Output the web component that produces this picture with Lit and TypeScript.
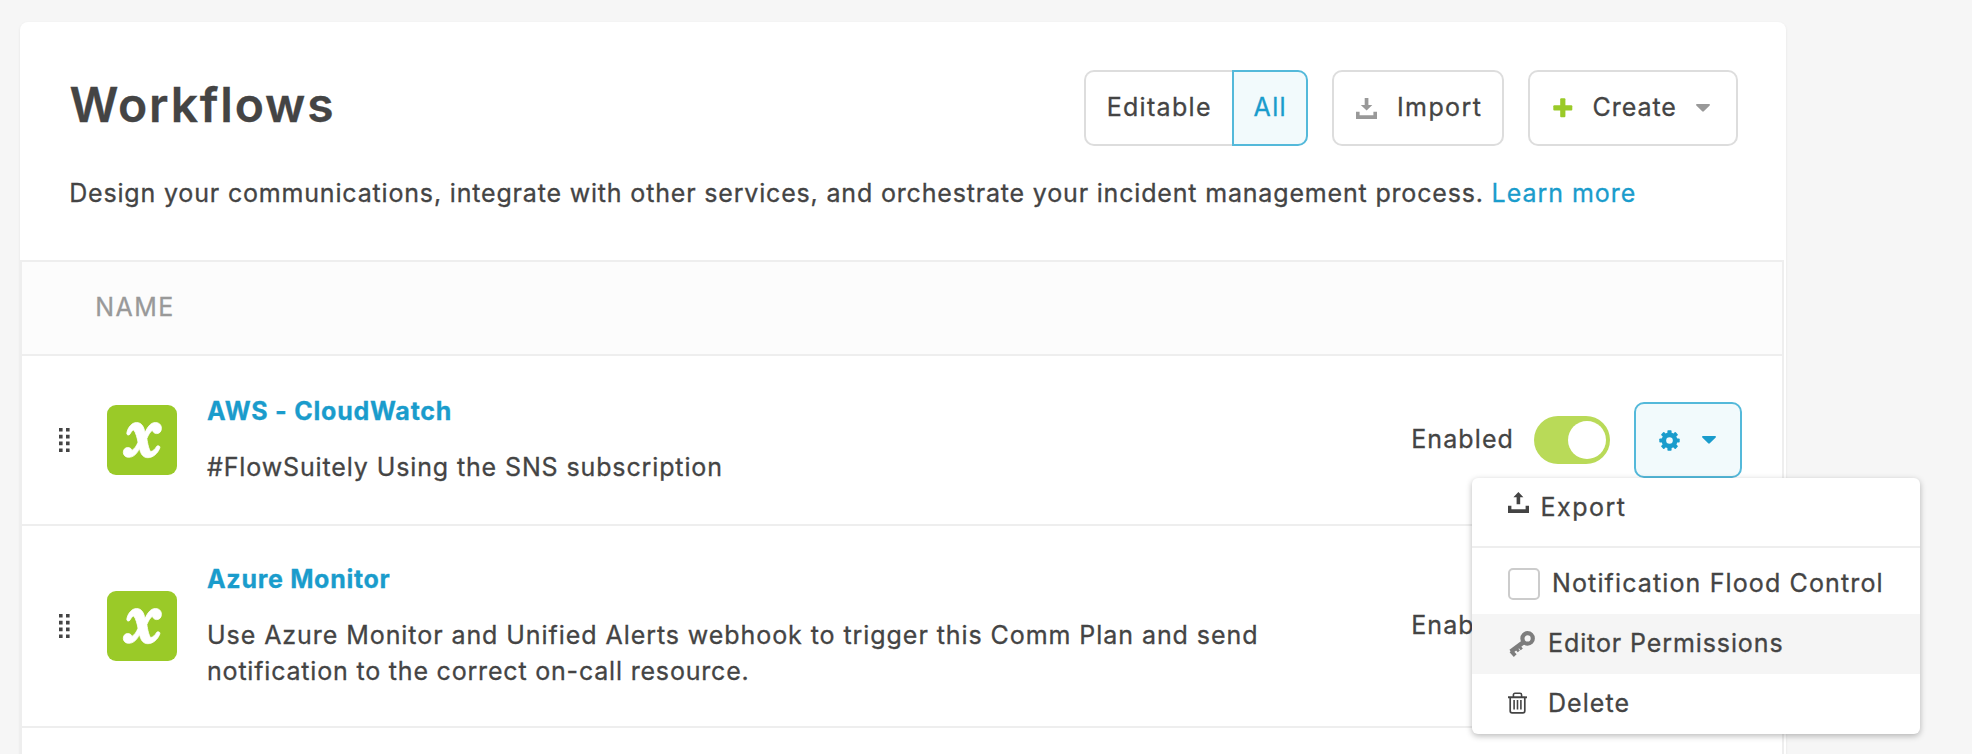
import { LitElement, html, css, nothing } from "lit";
import { customElement, property } from "lit/decorators.js";

const trayDown = html`<svg class="icon" width="21" height="21" viewBox="0 0 21 21" fill="currentColor">
  <path d="M8.7 0h3.7v7h3.9l-5.7 5.6L4.8 7h3.9z" /><path d="M0 13.7h3.6v3.6h13.8v-3.6H21V21H0z" />
</svg>`;

const trayUp = html`<svg class="icon" width="21" height="21" viewBox="0 0 21 21" fill="currentColor">
  <path d="M10.4 0l5 5.2h-3.2v7.1H8.6V5.2H5.4z" /><path d="M0 13.7h3.4v3.6h14.2v-3.6H21V21H0z" />
</svg>`;

const plus = html`<svg class="icon" width="20" height="20" viewBox="0 0 20 20" fill="#9aca28">
  <rect x="7.2" y="0.3" width="5.2" height="19" rx="1" /><rect x="0.3" y="7.2" width="19" height="5.2" rx="1" />
</svg>`;

const caret = html`<svg class="icon" width="14" height="8" viewBox="0 0 14 8" fill="currentColor">
  <path d="M1 0h12c.9 0 1.3.8.7 1.4L7.8 7.3c-.5.5-1.1.5-1.6 0L.3 1.4C-.3.8.1 0 1 0z" />
</svg>`;

const gear = html`<svg class="icon" width="21" height="21" viewBox="-10.5 -10.5 21 21" fill="currentColor">
  <rect x="-2.1" y="-10.2" width="4.2" height="20.4" rx=".8" />
  <rect x="-2.1" y="-10.2" width="4.2" height="20.4" rx=".8" transform="rotate(45)" />
  <rect x="-2.1" y="-10.2" width="4.2" height="20.4" rx=".8" transform="rotate(90)" />
  <rect x="-2.1" y="-10.2" width="4.2" height="20.4" rx=".8" transform="rotate(135)" />
  <circle r="7.9" /><circle r="3.3" fill="#f2fafc" />
</svg>`;

const key = html`<svg class="icon" width="28" height="28" viewBox="0 0 28 28" fill="none" stroke="#7d7d7d">
  <circle cx="19.6" cy="8.4" r="5.2" stroke-width="4.2" />
  <path d="M15.6 12.2L2.8 21.6" stroke-width="4.6" />
  <path d="M3 21l4.2 4.6" stroke-width="3.8" />
  <path d="M8.4 18.6l2.4 2.8M11.6 16.8l2.2 2.6" stroke-width="2.8" />
</svg>`;

const trash = html`<svg class="icon" width="19" height="22" viewBox="0 0 19 22" fill="none" stroke="#444">
  <path d="M0 5.3h19" stroke-width="1.9" />
  <path d="M5.4 5V2.9c0-1 .6-1.6 1.6-1.6h5c1 0 1.6.6 1.6 1.6V5" stroke-width="1.6" />
  <path d="M2.2 5.5v13.4c0 1.2.7 1.9 1.9 1.9h10.8c1.2 0 1.9-.7 1.9-1.9V5.5" stroke-width="1.7" />
  <path d="M6.1 8v9.4M9.5 8v9.4M12.9 8v9.4" stroke-width="1.6" />
</svg>`;

const handle = html`<svg class="handle" width="11" height="24" viewBox="0 0 11 24" fill="#444">
  <path d="M0 0h3.6v3.6H0zM7 0h3.6v3.6H7zM0 6.8h3.6v3.6H0zM7 6.8h3.6v3.6H7zM0 13.6h3.6v3.6H0zM7 13.6h3.6v3.6H7zM0 20.4h3.6V24H0zM7 20.4h3.6V24H7z" />
</svg>`;

const logo = html`<svg class="logo" width="70" height="70" viewBox="0 0 70 70">
  <rect width="70" height="70" rx="9" fill="#9aca28" />
  <path fill="#fff" stroke="#fff" stroke-width=".8" stroke-linejoin="round" d="M19.8 28.2C20.7 22.4 24.9 17.5 29.6 17.5C34.6 17.5 36.9 21.8 38 27.6C40.6 21.8 43.8 17.5 48.4 17.5C52 17.5 54.4 19.8 54.4 23.2C54.4 26.5 52.6 28.6 49.7 28.6C47.2 28.6 46 27 45.4 25.2C43.2 26.8 41.2 30 39.9 33.6C40.6 38.6 41.8 44.4 43.7 46.6C46 46.2 48.4 43.8 49.6 41.4C50.6 40 53.4 40.9 52.9 42.8C50.8 48.4 46.2 52.7 40.8 52.7C36.2 52.7 33.8 49.4 32.5 43.6C29.8 48.8 26.6 52.3 21.8 52.3C18.4 52.3 16.3 50.2 16.3 47.3C16.3 44.4 18.3 42.5 20.8 42.5C23.2 42.5 24.4 43.8 25 45.4C27.4 44 29.6 40.8 31 37.2C30.2 32.8 29 28 26.7 24.9C24.9 25.6 23.8 27.6 22.7 29.4C21.8 30.6 19.5 30 19.8 28.2Z" />
</svg>`;

@customElement("workflow-row")
class WorkflowRow extends LitElement {
  @property() name = "";
  @property() kind = "";
  @property({ attribute: false }) lines: string[] = [];
  @property({ type: Boolean }) open = false;

  static styles = css`
    :host { display: flex; align-items: center; box-sizing: border-box; padding: 0 40px 0 37px; border-bottom: 2px solid #eee; color: #444; }
    .handle { flex: none; }
    .logo { flex: none; margin-left: 37px; }
    .text { flex: 1; display: flex; flex-direction: column; gap: 20px; margin-left: 30px; padding-bottom: 2px; line-height: 36px; white-space: nowrap; }
    .name { font-weight: 700; color: #1a9ccc; letter-spacing: .78px; }
    .name.azure { letter-spacing: .7px; }
    .line { letter-spacing: .875px; }
    .line.azure { letter-spacing: .935px; }
    .line.azure + .line { letter-spacing: .81px; }
    .state { padding-bottom: 2px; letter-spacing: 1.1px; }
    .toggle { display: flex; justify-content: flex-end; align-items: center; box-sizing: border-box; width: 76px; height: 48px; padding-right: 4px; margin-left: 20px; border-radius: 24px; background: #b9da58; }
    .knob { width: 38.5px; height: 38.5px; border-radius: 50%; background: #fff; }
    .gear { display: flex; align-items: center; gap: 22px; box-sizing: border-box; width: 108px; height: 76px; padding-left: 22.5px; margin-left: 24px; border: 2px solid #54b9da; border-radius: 10px; background: #f2fafc; color: #1a9ccc; }
    .anchor { position: relative; }
  `;

  render() {
    return html`
      ${handle} ${logo}
      <div class="text">
        <div class="name ${this.kind}">${this.name}</div>
        <div>${this.lines.map((l) => html`<div class="line ${this.kind}">${l}</div>`)}</div>
      </div>
      <div class="state">Enabled</div>
      <div class="toggle"><div class="knob"></div></div>
      <div class="anchor">
        <div class="gear">${gear}${caret}</div>
        ${this.open ? html`<slot></slot>` : nothing}
      </div>
    `;
  }
}

@customElement("workflow-menu")
class WorkflowMenu extends LitElement {
  static styles = css`
    :host { position: absolute; z-index: 2; top: 76px; right: -178px; width: 448px; height: 256px; border-radius: 6px; overflow: hidden; background: #fff; box-shadow: 0 2px 6px rgba(0, 0, 0, .28); white-space: nowrap; }
    .item { display: flex; align-items: center; box-sizing: border-box; height: 60px; padding-left: 36px; }
    .item.hover { background: #f5f5f5; }
    .label { padding-bottom: 2px; }
    .icon { display: block; flex: none; }
    .rule { height: 2px; margin: 8px 0 6px; background: #eee; }
    .up { margin: 0 11.5px 11px 0; }
    .box { box-sizing: border-box; width: 32px; height: 32px; margin-right: 12px; border: 2px solid #ccc; border-radius: 5px; background: #fff; }
    .key { margin-right: 12px; }
    .trash { margin: 0 21px 3px 0; }
    .export { letter-spacing: 1.5px; }
    .flood { letter-spacing: 1.13px; }
    .editor { letter-spacing: .9px; }
    .delete { letter-spacing: 1.05px; }
  `;

  render() {
    return html`
      <div class="item"><span class="up">${trayUp}</span><span class="label export">Export</span></div>
      <div class="rule"></div>
      <div class="item"><span class="box"></span><span class="label flood">Notification Flood Control</span></div>
      <div class="item hover"><span class="key">${key}</span><span class="label editor">Editor Permissions</span></div>
      <div class="item"><span class="trash">${trash}</span><span class="label delete">Delete</span></div>
    `;
  }
}

@customElement("app-root")
class AppRoot extends LitElement {
  static styles = css`
    :host { display: block; box-sizing: border-box; height: 754px; overflow: hidden; padding: 22px 0 0 20px; background: #f6f6f6; color: #444; font: 400 25px/30px Inter, sans-serif; -webkit-text-stroke: .3px currentColor; }
    .card { box-sizing: border-box; width: 1766px; height: 760px; border-radius: 8px 8px 0 0; background: #fff; box-shadow: 0 1px 3px rgba(0, 0, 0, .08); }
    .head { box-sizing: border-box; height: 238px; padding: 48px 48px 0; white-space: nowrap; }
    .bar { display: flex; align-items: center; height: 76px; }
    .title { flex: 1; margin: 0 0 0 1.5px; padding-bottom: 6px; font-size: 48px; line-height: 60px; font-weight: 600; letter-spacing: 1.85px; }
    .btn { display: flex; align-items: center; box-sizing: border-box; height: 76px; border: 2px solid #ddd; border-radius: 10px; }
    .btn span { padding-bottom: 2px; }
    .icon { display: block; flex: none; }
    .editable { width: 148px; padding-left: 20.7px; border-right: 0; border-radius: 10px 0 0 10px; letter-spacing: 1.3px; }
    .all { width: 76px; padding-left: 19.5px; border-color: #54b9da; border-radius: 0 10px 10px 0; background: #f2fafc; color: #1a9ccc; letter-spacing: 1.4px; }
    .import { width: 172px; margin-left: 24px; padding-left: 22px; gap: 20px; letter-spacing: 1.4px; }
    .create { width: 210px; margin-left: 24px; padding-left: 23px; gap: 19.5px; letter-spacing: .95px; }
    .gray { color: #999; }
    .intro { margin: 29px 0 0 1.2px; line-height: 36px; letter-spacing: .826px; }
    .link { color: #1a9ccc; letter-spacing: .95px; }
    .table { box-sizing: border-box; width: 1764px; height: 520px; border: 2px solid #eee; border-bottom: 0; }
    .th { display: flex; align-items: center; box-sizing: border-box; height: 94px; padding: 0 0 2px 73.3px; border-bottom: 2px solid #eee; background: #fcfcfc; color: #999; letter-spacing: 1.45px; }
    .first { height: 170px; }
    .second { height: 202px; }
  `;

  render() {
    return html`
      <div class="card">
        <div class="head">
          <div class="bar">
            <h1 class="title">Workflows</h1>
            <div class="btn editable"><span>Editable</span></div>
            <div class="btn all"><span>All</span></div>
            <div class="btn import"><i class="gray">${trayDown}</i><span>Import</span></div>
            <div class="btn create">${plus}<span>Create</span><i class="gray">${caret}</i></div>
          </div>
          <p class="intro">Design your communications, integrate with other services, and orchestrate your incident management process. <a class="link">Learn more</a></p>
        </div>
        <div class="table">
          <div class="th"><span>NAME</span></div>
          <workflow-row class="first" name="AWS - CloudWatch" .lines=${["#FlowSuitely Using the SNS subscription"]} open><workflow-menu></workflow-menu></workflow-row>
          <workflow-row class="second" name="Azure Monitor" kind="azure" .lines=${["Use Azure Monitor and Unified Alerts webhook to trigger this Comm Plan and send", "notification to the correct on-call resource."]}></workflow-row>
        </div>
      </div>
    `;
  }
}
